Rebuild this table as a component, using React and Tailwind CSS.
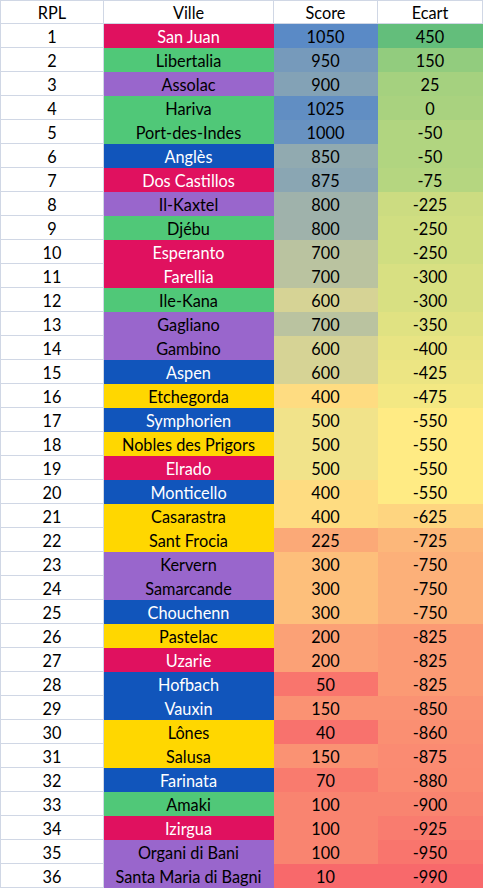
const FILLS = {
  pink: "bg-[#e0115f] text-white",
  green: "bg-[#50c878] text-black",
  purple: "bg-[#9966cc] text-black",
  blue: "bg-[#1155bb] text-white",
  yellow: "bg-[#ffd700] text-black",
};

const ROWS = [
  [1, "San Juan", "pink", 1050, 450],
  [2, "Libertalia", "green", 950, 150],
  [3, "Assolac", "purple", 900, 25],
  [4, "Hariva", "green", 1025, 0],
  [5, "Port-des-Indes", "green", 1000, -50],
  [6, "Anglès", "blue", 850, -50],
  [7, "Dos Castillos", "pink", 875, -75],
  [8, "Il-Kaxtel", "purple", 800, -225],
  [9, "Djébu", "green", 800, -250],
  [10, "Esperanto", "pink", 700, -250],
  [11, "Farellia", "pink", 700, -300],
  [12, "Ile-Kana", "green", 600, -300],
  [13, "Gagliano", "purple", 700, -350],
  [14, "Gambino", "purple", 600, -400],
  [15, "Aspen", "blue", 600, -425],
  [16, "Etchegorda", "yellow", 400, -475],
  [17, "Symphorien", "blue", 500, -550],
  [18, "Nobles des Prigors", "yellow", 500, -550],
  [19, "Elrado", "pink", 500, -550],
  [20, "Monticello", "blue", 400, -550],
  [21, "Casarastra", "yellow", 400, -625],
  [22, "Sant Frocia", "yellow", 225, -725],
  [23, "Kervern", "purple", 300, -750],
  [24, "Samarcande", "purple", 300, -750],
  [25, "Chouchenn", "blue", 300, -750],
  [26, "Pastelac", "yellow", 200, -825],
  [27, "Uzarie", "pink", 200, -825],
  [28, "Hofbach", "blue", 50, -825],
  [29, "Vauxin", "blue", 150, -850],
  [30, "Lônes", "yellow", 40, -860],
  [31, "Salusa", "yellow", 150, -875],
  [32, "Farinata", "blue", 70, -880],
  [33, "Amaki", "green", 100, -900],
  [34, "Izirgua", "pink", 100, -925],
  [35, "Organi di Bani", "purple", 100, -950],
  [36, "Santa Maria di Bagni", "purple", 10, -990],
];

// 3-colour scale like the spreadsheet: min / 50th percentile / max
function makeScale(values, low, mid, high) {
  const sorted = [...values].sort((a, b) => a - b);
  const min = sorted[0];
  const max = sorted[sorted.length - 1];
  const pos = (sorted.length - 1) / 2;
  const median =
    sorted[Math.floor(pos)] + (sorted[Math.ceil(pos)] - sorted[Math.floor(pos)]) * (pos - Math.floor(pos));

  const mix = (a, b, t) => a.map((c, i) => Math.round(c + (b[i] - c) * t));

  return (v) => {
    const rgb =
      v <= median
        ? mix(low, mid, median === min ? 1 : (v - min) / (median - min))
        : mix(mid, high, (v - median) / (max - median));
    return `rgb(${rgb.join(",")})`;
  };
}

const RED = [248, 105, 107];
const YELLOW = [255, 235, 132];
const BLUE = [90, 138, 198];
const GREEN = [99, 190, 123];

const scoreColor = makeScale(ROWS.map((r) => r[3]), RED, YELLOW, BLUE);
const ecartColor = makeScale(ROWS.map((r) => r[4]), RED, YELLOW, GREEN);

const cell = "flex items-center justify-center pt-[3px] border-r border-b";

export default function App() {
  return (
    <div className="min-h-screen bg-white">
      <div
        className="grid w-[483px] grid-cols-[103px_170px_104px_105px] border-l border-t border-[#d0d7e5] text-[16.3px] leading-none text-black"
        style={{ fontFamily: "Lato, 'Open Sans', sans-serif" }}
      >
        {["RPL", "Ville", "Score", "Ecart"].map((h) => (
          <div key={h} className={`${cell} h-[23px] border-[#d0d7e5] bg-white`}>
            {h}
          </div>
        ))}

        {ROWS.map(([rank, ville, fill, score, ecart]) => (
          <div key={rank} className="contents">
            <div className={`${cell} h-6 border-[#d0d7e5] bg-white`}>{rank}</div>
            <div className={`${cell} h-6 border-transparent ${FILLS[fill]}`}>{ville}</div>
            <div
              className={`${cell} h-6 border-transparent`}
              style={{ backgroundColor: scoreColor(score) }}
            >
              {score}
            </div>
            <div
              className={`${cell} h-6 border-transparent`}
              style={{ backgroundColor: ecartColor(ecart) }}
            >
              {ecart}
            </div>
          </div>
        ))}
      </div>
    </div>
  );
}
